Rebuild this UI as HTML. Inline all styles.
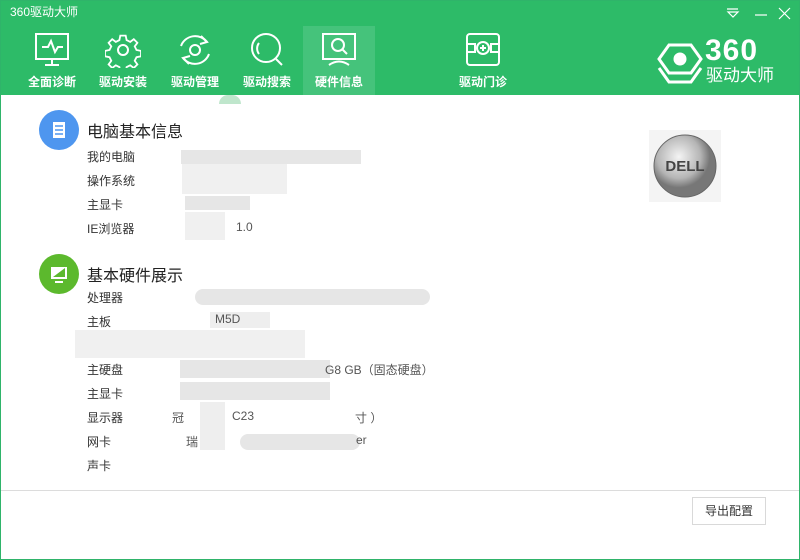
<!DOCTYPE html>
<html><head><meta charset="utf-8"><style>
*{margin:0;padding:0;box-sizing:border-box}
body{width:800px;height:560px;overflow:hidden;background:#fff;font-family:"Liberation Sans","Noto Sans CJK SC",sans-serif;position:relative}
.frame{position:absolute;left:0;top:0;width:800px;height:560px;border:1px solid #2fb46a;}
.hdr{position:absolute;left:0;top:0;width:800px;height:95px;background:#2dbb68}
.title{position:absolute;left:10px;top:3px;color:#fff;font-size:12px}
.tab{position:absolute;top:26px;width:72px;height:69px;text-align:center;color:#fff;font-size:12px;font-weight:bold}
.tab svg{position:absolute;left:18px;top:6px}
.tab span{position:absolute;left:0;right:0;top:47px}
.sel{background:#45c37b}
.lbl{position:absolute;left:87px;font-size:12px;color:#333}
.h{position:absolute;left:87px;font-size:16px;color:#222}
.b{position:absolute;background:#e6e6e6}
.t{position:absolute;font-size:12px;color:#555}
</style></head><body>
<div class="hdr"></div>
<div class="title">360驱动大师</div>
<svg style="position:absolute;left:724px;top:4px" width="70" height="18" stroke="#fff" fill="none" stroke-width="1.2">
<path d="M3 5h11M4 8l5 5 5-5z"/><path d="M31 11h12"/><path d="M55 4l11 11M66 4L55 15"/></svg>

<div class="tab" style="left:16px"><svg width="36" height="36" stroke="#fff" fill="none" stroke-width="2"><rect x="2" y="2" width="32" height="25"/><path d="M8 15h6l3-6 4 11 3-5h5M18 27v5M11 33h14"/></svg><span>全面诊断</span></div>
<div class="tab" style="left:87px"><svg width="36" height="36" stroke="#fff" fill="none" stroke-width="2"><path d="M15 2h6l1 5 4 2 4-3 4 4-3 4 2 4 5 1v6l-5 1-2 4 3 4-4 4-4-3-4 2-1 5h-6l-1-5-4-2-4 3-4-4 3-4-2-4-5-1v-6l5-1 2-4-3-4 4-4 4 3 4-2z" transform="scale(.9) translate(2,2)"/><circle cx="18" cy="18" r="5"/></svg><span>驱动安装</span></div>
<div class="tab" style="left:159px"><svg width="36" height="36" stroke="#fff" fill="none" stroke-width="2"><path d="M30 10A15 15 0 0 0 4 14M6 26A15 15 0 0 0 32 22"/><path d="M24 4l6 6-7 2M12 32l-6-6 7-2"/><circle cx="18" cy="18" r="5"/></svg><span>驱动管理</span></div>
<div class="tab" style="left:231px"><svg width="36" height="36" stroke="#fff" fill="none" stroke-width="2"><circle cx="17" cy="16" r="14"/><path d="M27 27l6 6M10 11a9 9 0 0 0 0 11"/></svg><span>驱动搜索</span></div>
<div class="tab sel" style="left:303px"><svg width="36" height="36" stroke="#fff" fill="none" stroke-width="2"><rect x="2" y="2" width="32" height="25"/><circle cx="17" cy="13" r="6"/><path d="M21 17l5 5M8 33q10-7 20 0"/></svg><span>硬件信息</span></div>
<div class="tab" style="left:447px"><svg width="36" height="36" stroke="#fff" fill="none" stroke-width="2"><rect x="2" y="2" width="32" height="31" rx="3"/><circle cx="18" cy="16" r="6"/><path d="M18 13v6M15 16h6M2 12h8v8H2M34 12h-8v8h8"/></svg><span>驱动门诊</span></div>

<svg style="position:absolute;left:655px;top:42px" width="50" height="44" stroke="#fff" fill="none" stroke-width="3"><path d="M14 3h22l10 14-10 14H14L4 17z"/><path d="M4 26l10 14h22l10-14"/><circle cx="25" cy="17" r="5" fill="#fff"/></svg>
<div style="position:absolute;left:705px;top:36px;color:#fff;font-size:30px;font-weight:bold;letter-spacing:1px;line-height:30px">360</div>
<div style="position:absolute;left:706px;top:66px;color:#fff;font-size:17px;line-height:20px">驱动大师</div>

<div style="position:absolute;left:219px;top:95px;width:22px;height:9px;background:#bfe6cc;border-radius:11px 11px 0 0"></div>

<svg style="position:absolute;left:39px;top:110px" width="40" height="40"><circle cx="20" cy="20" r="20" fill="#4e96ef"/><rect x="14" y="12" width="12" height="16" fill="#fff"/><path d="M16 16h8M16 20h8M16 24h8" stroke="#4e96ef" stroke-width="1.5"/></svg>
<div class="h" style="top:118px">电脑基本信息</div>
<div class="lbl" style="top:148px">我的电脑</div>
<div class="lbl" style="top:172px">操作系统</div>
<div class="lbl" style="top:196px">主显卡</div>
<div class="lbl" style="top:220px">IE浏览器</div>
<div class="b" style="left:181px;top:150px;width:180px;height:14px"></div>
<div class="b" style="left:182px;top:164px;width:105px;height:30px;background:#f0f0f0"></div>
<div class="b" style="left:185px;top:196px;width:65px;height:14px"></div>
<div class="b" style="left:185px;top:212px;width:40px;height:28px;background:#f0f0f0"></div>
<div class="t" style="left:236px;top:220px">1.0</div>

<svg style="position:absolute;left:649px;top:130px" width="72" height="72"><defs><radialGradient id="g" cx="40%" cy="35%"><stop offset="0" stop-color="#f4f4f4"/><stop offset=".7" stop-color="#b5b5b5"/><stop offset="1" stop-color="#777"/></radialGradient></defs><rect width="72" height="72" fill="#f4f4f4"/><circle cx="36" cy="36" r="31" fill="url(#g)" stroke="#666"/><text x="36" y="41" text-anchor="middle" font-size="15" font-weight="bold" fill="#444" font-family="Liberation Sans">DELL</text></svg>

<svg style="position:absolute;left:39px;top:254px" width="40" height="40"><circle cx="20" cy="20" r="20" fill="#5cb92d"/><rect x="12" y="13" width="16" height="12" fill="#fff"/><path d="M14 23l12-9v9z" fill="#5cb92d"/><path d="M16 28h8" stroke="#fff" stroke-width="2"/></svg>
<div class="h" style="top:262px">基本硬件展示</div>
<div class="lbl" style="top:289px">处理器</div>
<div class="lbl" style="top:313px">主板</div>
<div class="lbl" style="top:361px">主硬盘</div>
<div class="lbl" style="top:385px">主显卡</div>
<div class="lbl" style="top:409px">显示器</div>
<div class="lbl" style="top:433px">网卡</div>
<div class="lbl" style="top:457px">声卡</div>
<div class="b" style="left:195px;top:289px;width:235px;height:16px;border-radius:8px"></div>
<div class="b" style="left:210px;top:312px;width:60px;height:16px;background:#eee"></div>
<div class="t" style="left:215px;top:312px">M5D</div>
<div class="b" style="left:75px;top:330px;width:230px;height:28px;background:#f0f0f0"></div>
<div class="b" style="left:180px;top:360px;width:150px;height:18px"></div>
<div class="t" style="left:325px;top:361px">G8 GB（固态硬盘）</div>
<div class="b" style="left:180px;top:382px;width:150px;height:18px"></div>
<div class="t" style="left:172px;top:409px">冠</div><div class="t" style="left:232px;top:409px">C23</div><div class="t" style="left:355px;top:409px">寸 ）</div>
<div class="b" style="left:200px;top:402px;width:25px;height:48px;background:#eee"></div>
<div class="t" style="left:186px;top:433px">瑞</div>
<div class="b" style="left:240px;top:434px;width:120px;height:16px;border-radius:8px"></div>
<div class="t" style="left:356px;top:433px">er</div>

<div style="position:absolute;left:1px;top:490px;width:798px;height:1px;background:#dcdcdc"></div>
<div style="position:absolute;left:692px;top:497px;width:74px;height:28px;border:1px solid #d9d9d9;font-size:12px;color:#333;text-align:center;line-height:26px">导出配置</div>
<div class="frame"></div>
</body></html>
